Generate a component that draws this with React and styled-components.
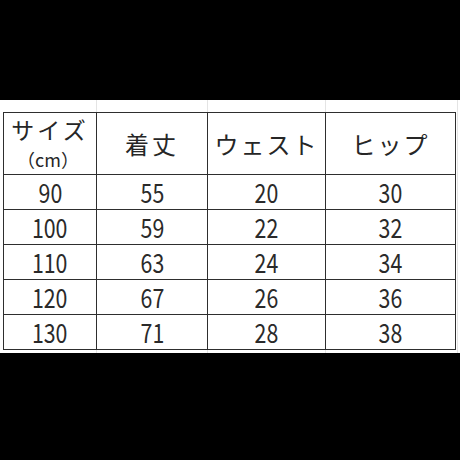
import React from "react";
import styled, { createGlobalStyle } from "styled-components";

const GlobalStyle = createGlobalStyle`
  html, body {
    margin: 0;
    padding: 0;
    background: #000;
  }
  body {
    font-family: "Noto Sans CJK JP", "Noto Sans", sans-serif;
    color: #2a2a2a;
  }
`;

const rows = [
  ["90", "55", "20", "30"],
  ["100", "59", "22", "32"],
  ["110", "63", "24", "34"],
  ["120", "67", "26", "36"],
  ["130", "71", "28", "38"],
];

const widths = [93, 111, 118, 130];

function App() {
  return (
    <Page>
      <GlobalStyle />
      <Sheet>
        <Table>
          <colgroup>
            {widths.map((w, i) => (
              <col key={i} style={{ width: w }} />
            ))}
          </colgroup>
          <thead>
            <tr>
              <Head>
                <SizeLabel>
                  <Title>サイズ</Title>
                  <Unit>（cm）</Unit>
                </SizeLabel>
              </Head>
              <Head>着丈</Head>
              <Head $spaced>ウェスト</Head>
              <Head $spaced>ヒップ</Head>
            </tr>
          </thead>
          <tbody>
            {rows.map((r) => (
              <tr key={r[0]}>
                {r.map((v, i) => (
                  <Cell key={i}>
                    <Num>{v}</Num>
                  </Cell>
                ))}
              </tr>
            ))}
          </tbody>
        </Table>
      </Sheet>
    </Page>
  );
}

const Page = styled.div`
  width: 460px;
  height: 460px;
  padding-top: 100px;
  box-sizing: border-box;
  background: #000;
`;

const Sheet = styled.div`
  background-color: #fff;
  background-image: linear-gradient(#e4e4e4, #e4e4e4),
    linear-gradient(#e4e4e4, #e4e4e4), linear-gradient(#e4e4e4, #e4e4e4),
    linear-gradient(#e4e4e4, #e4e4e4);
  background-size: 1px 100%, 1px 100%, 1px 100%, 1px 100%;
  background-position: 96px 0, 207px 0, 325px 0, 457px 0;
  background-repeat: no-repeat;
  height: 253px;
  padding: 12px 5px 0 3px;
  box-sizing: border-box;
`;

const Table = styled.table`
  border-collapse: collapse;
  table-layout: fixed;
  width: 452px;
  background: #fff;
`;

const Head = styled.th`
  height: 61px;
  padding: 0;
  border: 1.5px solid #2e2e2e;
  font-weight: 400;
  font-size: 24px;
  letter-spacing: ${(p) => (p.$spaced ? "2px" : "3px")};
  text-align: center;
  vertical-align: middle;
  color: #262626;
`;

const SizeLabel = styled.div`
  display: flex;
  flex-direction: column;
  align-items: center;
`;

const Title = styled.span`
  display: block;
  font-size: 23px;
  line-height: 34px;
  letter-spacing: 3px;
  margin-top: -3px;
`;

const Unit = styled.span`
  display: block;
  font-size: 18px;
  line-height: 26px;
  letter-spacing: 0;
  margin-right: 4px;
`;

const Cell = styled.td`
  height: 34px;
  padding: 0;
  border: 1.5px solid #2e2e2e;
  text-align: center;
  vertical-align: middle;
  color: #2a2a2a;
`;

const Num = styled.span`
  display: inline-block;
  font-size: 26px;
  line-height: 34px;
  transform: scaleX(0.82);
`;

export default App;
